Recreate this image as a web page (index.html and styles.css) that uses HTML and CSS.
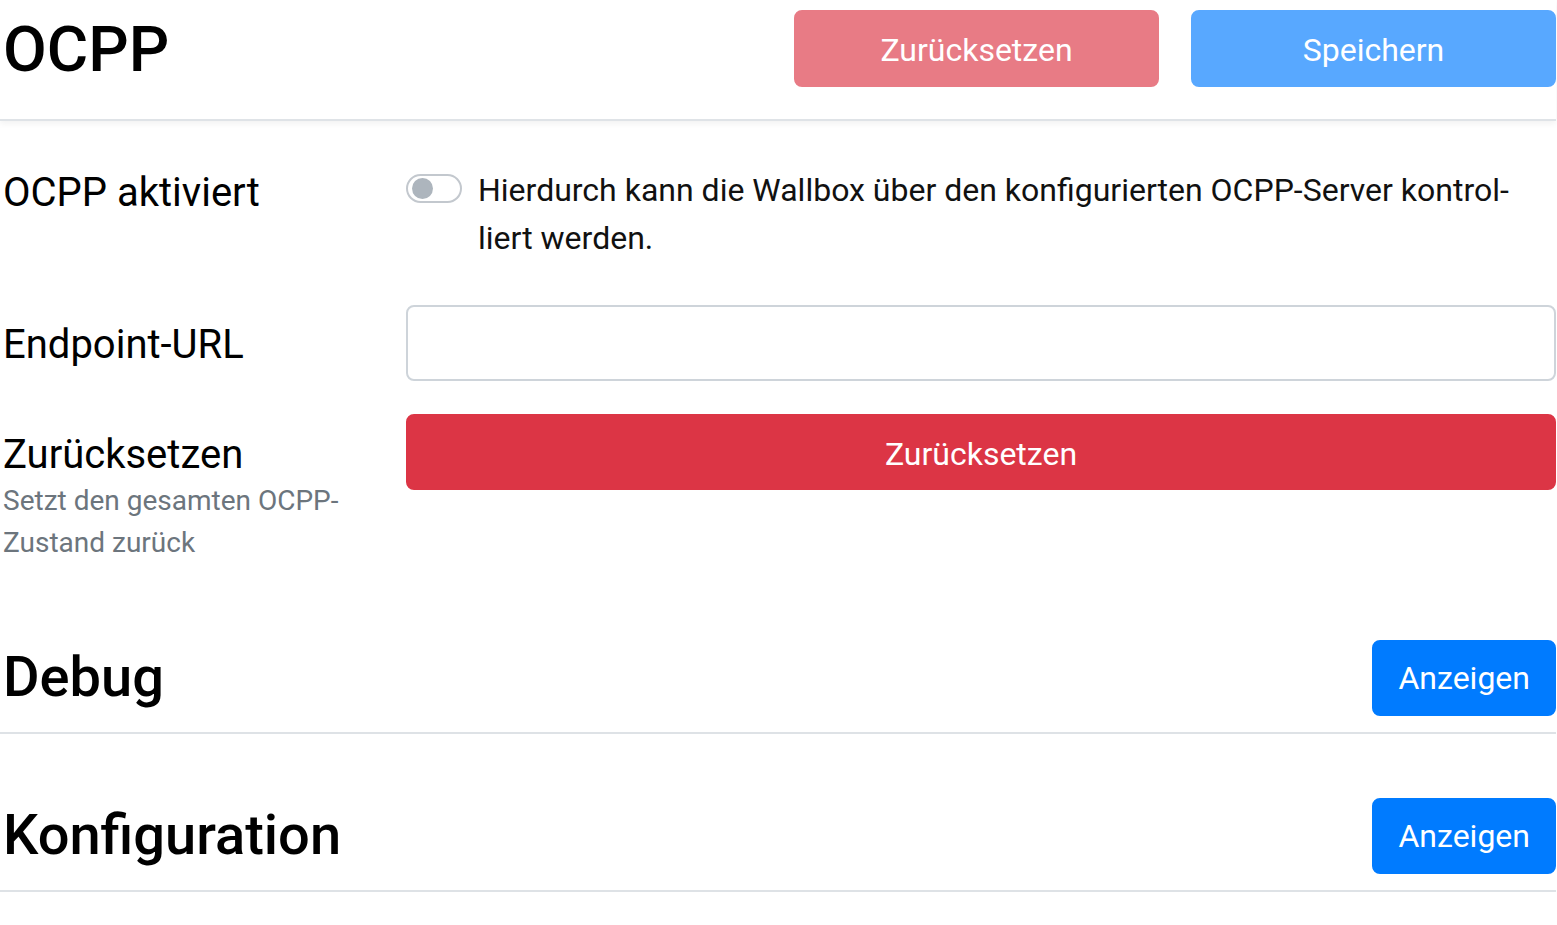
FILE: index.html
```html
<!DOCTYPE html>
<html lang="de">
<head>
<meta charset="utf-8">
<title>OCPP</title>
<link rel="stylesheet" href="styles.css">
</head>
<body>
<div class="page">
  <header class="topbar">
    <h1 class="title">OCPP</h1>
    <div class="actions">
      <button class="btn btn-danger btn-disabled btn-wide" disabled>Zurücksetzen</button>
      <button class="btn btn-primary btn-disabled btn-wide" disabled>Speichern</button>
    </div>
  </header>

  <form class="form">
    <div class="row row-switch">
      <label class="label">OCPP aktiviert</label>
      <div class="control control-switch">
        <span class="switch"><span class="knob"></span></span>
        <span class="switch-text">Hierdurch kann die Wallbox über den konfigurierten OCPP-Server kontrol&shy;liert werden.</span>
      </div>
    </div>

    <div class="row row-input">
      <label class="label">Endpoint-URL</label>
      <div class="control">
        <input class="input" type="text">
      </div>
    </div>

    <div class="row row-reset">
      <div class="label-group">
        <label class="label">Zurücksetzen</label>
        <div class="hint">Setzt den gesamten OCPP-Zustand zurück</div>
      </div>
      <div class="control">
        <button type="button" class="btn btn-danger btn-block">Zurücksetzen</button>
      </div>
    </div>
  </form>

  <section class="section section-debug">
    <div class="section-head">
      <h2 class="section-title">Debug</h2>
      <button class="btn btn-primary">Anzeigen</button>
    </div>
  </section>

  <section class="section section-config">
    <div class="section-head">
      <h2 class="section-title">Konfiguration</h2>
      <button class="btn btn-primary">Anzeigen</button>
    </div>
  </section>
</div>
</body>
</html>
```

FILE: styles.css
```css
* { box-sizing: border-box; }

html, body {
  margin: 0;
  padding: 0;
  background: #fff;
}

body {
  font-family: Roboto, "Liberation Sans", Arial, sans-serif;
  color: #212529;
  font-size: 32px;
  line-height: 1.5;
}

.page {
  width: 1556px;
}

.topbar {
  display: flex;
  align-items: center;
  justify-content: space-between;
  height: 121px;
  padding: 10px 0 32px 3px;
  border-bottom: 2px solid #dfe3e7;
  box-shadow: 0 3px 6px rgba(0, 0, 0, 0.05);
}

.title {
  margin: 0;
  padding-top: 3px;
  font-size: 63.5px;
  font-weight: 500;
  line-height: 1.2;
  color: #000;
}

.actions {
  display: flex;
  gap: 32px;
}

.btn {
  font-family: inherit;
  font-size: 32px;
  line-height: 48px;
  padding: 12px 24px;
  border: 2px solid transparent;
  border-radius: 8px;
  color: #fff;
  cursor: pointer;
}

.btn-wide {
  width: 365px;
  height: 77px;
  padding-top: 14px;
  padding-bottom: 11px;
}

.btn-danger {
  background: #dc3545;
  border-color: #dc3545;
}

.btn-primary {
  background: #007bff;
  border-color: #007bff;
}

.btn-disabled {
  opacity: 0.65;
}

.btn-block {
  display: block;
  width: 100%;
  padding-top: 14px;
  padding-bottom: 10px;
}

.form {
  padding-top: 33px;
}

.row {
  display: grid;
  grid-template-columns: 406px 1fr;
  align-items: start;
}

.label {
  display: block;
  font-size: 40px;
  line-height: 48px;
  padding: 15px 0 0 3px;
  color: #000;
}

.row-switch {
  margin-bottom: 43px;
}

.row-input {
  margin-bottom: 33px;
}

.row-input .label {
  padding-top: 16px;
}

.row-reset .label {
  padding-top: 17px;
}

.control-switch {
  display: flex;
  align-items: flex-start;
  padding-top: 12px;
  padding-right: 30px;
}

.switch {
  flex: none;
  position: relative;
  width: 56px;
  height: 29px;
  margin-top: 8px;
  margin-right: 16px;
  border: 2px solid #c3c8ce;
  border-radius: 15px;
  background: #fff;
}

.knob {
  position: absolute;
  left: 4px;
  top: 2px;
  width: 21px;
  height: 21px;
  border-radius: 50%;
  background: #adb5bd;
}

.switch-text {
  font-size: 32px;
  line-height: 48px;
  color: #111;
  hyphens: manual;
}

.input {
  display: block;
  width: 100%;
  height: 76px;
  font-family: inherit;
  font-size: 32px;
  padding: 12px 24px;
  border: 2px solid #ced4da;
  border-radius: 8px;
  background: #fff;
}

.label-group {
  padding-right: 40px;
}

.hint {
  font-size: 28px;
  line-height: 42px;
  margin-top: 1px;
  padding-left: 3px;
  color: #6c757d;
}

.section-head {
  display: flex;
  align-items: center;
  justify-content: space-between;
  padding-bottom: 16px;
  padding-left: 3px;
  border-bottom: 2px solid #dee2e6;
}

.section-debug {
  margin-top: 76px;
}

.section-config {
  margin-top: 64px;
}

.section-title {
  margin: 0;
  font-size: 56px;
  font-weight: 500;
  line-height: 1.2;
  color: #000;
}
```
